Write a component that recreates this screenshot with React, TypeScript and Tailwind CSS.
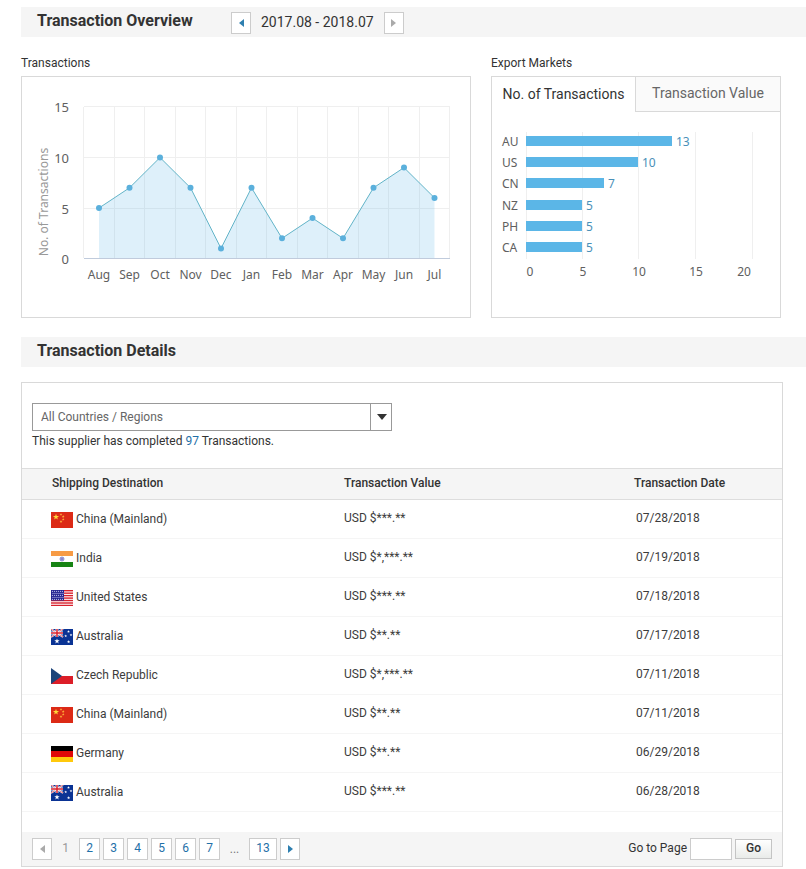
import React, { useState } from "react";

const months = ["Aug", "Sep", "Oct", "Nov", "Dec", "Jan", "Feb", "Mar", "Apr", "May", "Jun", "Jul"];
const counts = [5, 7, 10, 7, 1, 7, 2, 4, 2, 7, 9, 6];

const markets = [
  { code: "AU", value: 13 },
  { code: "US", value: 10 },
  { code: "CN", value: 7 },
  { code: "NZ", value: 5 },
  { code: "PH", value: 5 },
  { code: "CA", value: 5 },
];

const rows = [
  { country: "China (Mainland)", flag: "cn", value: "USD $***.**", date: "07/28/2018" },
  { country: "India", flag: "in", value: "USD $*,***.**", date: "07/19/2018" },
  { country: "United States", flag: "us", value: "USD $***.**", date: "07/18/2018" },
  { country: "Australia", flag: "au", value: "USD $**.**", date: "07/17/2018" },
  { country: "Czech Republic", flag: "cz", value: "USD $*,***.**", date: "07/11/2018" },
  { country: "China (Mainland)", flag: "cn", value: "USD $**.**", date: "07/11/2018" },
  { country: "Germany", flag: "de", value: "USD $**.**", date: "06/29/2018" },
  { country: "Australia", flag: "au", value: "USD $***.**", date: "06/28/2018" },
];

function starPoints(cx: number, cy: number, r: number) {
  return Array.from({ length: 10 }, (_, i) => {
    const radius = i % 2 ? r * 0.4 : r;
    const a = -Math.PI / 2 + (i * Math.PI) / 5;
    return `${cx + radius * Math.cos(a)},${cy + radius * Math.sin(a)}`;
  }).join(" ");
}

function Star({ x, y, r, fill }: { x: number; y: number; r: number; fill: string }) {
  return <polygon points={starPoints(x, y, r)} fill={fill} />;
}

function Flag({ code }: { code: string }) {
  return (
    <svg viewBox="0 0 22 16" className="h-4 w-[22px] shrink-0" aria-hidden="true">
      {code === "cn" && (
        <>
          <rect width="22" height="16" fill="#dc2a16" />
          <Star x={5} y={5} r={3.2} fill="#ffd83a" />
          <Star x={10} y={2.4} r={1.5} fill="#ffb03a" />
          <Star x={12.2} y={4.6} r={1.5} fill="#ffb03a" />
          <Star x={12.2} y={7.4} r={1.5} fill="#ffb03a" />
          <Star x={10} y={9.6} r={1.5} fill="#ffb03a" />
        </>
      )}
      {code === "in" && (
        <>
          <rect width="22" height="16" fill="#fff" />
          <rect width="22" height="5" fill="#f79b45" />
          <rect y="11" width="22" height="5" fill="#178414" />
          <circle cx="11" cy="8" r="2" fill="#b9b9e6" stroke="#7777c4" strokeWidth="0.8" />
          <circle cx="11" cy="8" r="0.7" fill="#3c3ca0" />
        </>
      )}
      {code === "us" && (
        <>
          <rect width="22" height="16" fill="#fff" />
          {[0, 1, 2, 3, 4, 5, 6].map((i) => (
            <rect key={i} y={i * 2.46} width="22" height="1.4" fill="#d8202c" />
          ))}
          <rect width="13" height="10.5" fill="#23238f" />
          {Array.from({ length: 30 }, (_, i) => {
            const r = Math.floor(i / 6);
            return <circle key={i} cx={1.4 + (i % 6) * 2 + (r % 2 ? 0.6 : 0)} cy={1.3 + r * 2} r="0.6" fill="#c9c9f2" />;
          })}
        </>
      )}
      {code === "au" && (
        <>
          <rect width="22" height="16" fill="#0a3394" />
          <path d="M0 0L12 8M12 0L0 8" stroke="#fff" strokeWidth="1.8" />
          <path d="M0 0L12 8M12 0L0 8" stroke="#d8202c" strokeWidth="0.7" />
          <path d="M6 0V8M0 4H12" stroke="#fff" strokeWidth="2.8" />
          <path d="M6 0V8M0 4H12" stroke="#d8202c" strokeWidth="1.5" />
          <Star x={6} y={12.2} r={2.8} fill="#fff" />
          <Star x={17.5} y={2.6} r={1.5} fill="#fff" />
          <Star x={14.7} y={7} r={1.5} fill="#fff" />
          <Star x={20} y={6} r={1.5} fill="#fff" />
          <Star x={17.6} y={12.8} r={1.7} fill="#fff" />
        </>
      )}
      {code === "cz" && (
        <>
          <rect width="22" height="8" fill="#fff" />
          <rect y="8" width="22" height="8" fill="#dc1e28" />
          <path d="M0 0L11 8L0 16Z" fill="#1d4479" />
        </>
      )}
      {code === "de" && (
        <>
          <rect width="22" height="16" fill="#000" />
          <rect y="5" width="22" height="6" fill="#e00808" />
          <rect y="11" width="22" height="5" fill="#ffc90c" />
        </>
      )}
    </svg>
  );
}

function Arrow({ dir, className }: { dir: "left" | "right"; className: string }) {
  return (
    <svg viewBox="0 0 5 8" className={`h-2 w-[5px] fill-current ${className}`} aria-hidden="true">
      <path d={dir === "left" ? "M5 0V8L0 4Z" : "M0 0V8L5 4Z"} />
    </svg>
  );
}

function LineChart() {
  const px = (i: number) => 77 + i * 30.5;
  const py = (v: number) => 181.5 - v * 10.1;
  const line = counts.map((v, i) => `${px(i)},${py(v)}`).join(" ");
  return (
    <svg viewBox="0 0 448 240" className="block w-full font-['Noto_Sans',sans-serif] text-[12px]" role="img" aria-label="Transactions per month">
      {Array.from({ length: 13 }, (_, i) => (
        <line key={i} x1={Math.round(62 + i * 30.5) - 0.5} x2={Math.round(62 + i * 30.5) - 0.5} y1="30" y2="181" stroke="#efefef" />
      ))}
      {[29.5, 80.5, 131.5].map((y) => (
        <line key={y} x1="62" x2="428" y1={y} y2={y} stroke="#efefef" />
      ))}
      <polygon points={`${px(0)},181 ${line} ${px(11)},181`} fill="#5bb6e7" fillOpacity="0.2" />
      <line x1="62" x2="428" y1="181.5" y2="181.5" stroke="#c0cbdc" />
      <polyline points={line} fill="none" stroke="#62b4c8" strokeWidth="1" />
      {counts.map((v, i) => (
        <circle key={i} cx={px(i)} cy={py(v)} r="3" fill="#5bb0dc" />
      ))}
      <g fill="#606060">
        {months.map((m, i) => (
          <text key={m} x={px(i)} y="202" textAnchor="middle">{m}</text>
        ))}
      </g>
      <g fill="#606060" className="text-[13px]">
        {[15, 10, 5, 0].map((n, i) => (
          <text key={n} x="47" y={35 + i * 51 - (i === 3 ? 1 : 0)} textAnchor="end">{n}</text>
        ))}
      </g>
      <text transform="translate(26 125) rotate(-90)" textAnchor="middle" fill="#999">No. of Transactions</text>
    </svg>
  );
}

function MarketChart() {
  const ticks = [
    { n: 0, x: 38 },
    { n: 5, x: 91 },
    { n: 10, x: 147 },
    { n: 15, x: 204 },
    { n: 20, x: 252 },
  ];
  return (
    <svg viewBox="0 0 288 205" className="block w-full font-['Noto_Sans',sans-serif] text-[12px]" role="img" aria-label="Transactions per export market">
      {[34.5, 90.5, 146.5, 203.5, 260.5].map((x) => (
        <line key={x} x1={x} x2={x} y1="20" y2="147" stroke="#efefef" />
      ))}
      {markets.map((m, i) => {
        const y = Math.round(24 + i * 21.2);
        const w = Math.round(m.value * 11.3 - 1);
        return (
          <g key={m.code}>
            <text x="10" y={y + 10} fill="#606060">{m.code}</text>
            <rect x="34" y={y} width={w} height="10" fill="#5bb6e7" />
            <text x={w + 38} y={y + 10} fill="#4a90b8">{m.value}</text>
          </g>
        );
      })}
      <g fill="#606060" textAnchor="middle">
        {ticks.map((t) => (
          <text key={t.n} x={t.x} y="164">{t.n}</text>
        ))}
      </g>
    </svg>
  );
}

export default function App() {
  const [page, setPage] = useState("");
  const box = "flex h-[22px] items-center justify-center border border-[#cccccc] bg-white";
  return (
    <main className="min-w-[700px] bg-white pt-[7px] pl-[21px] font-[Roboto,sans-serif] text-[12px] leading-4 text-[#333333]">
      <header className="flex h-[30px] items-center bg-[#f5f5f5] pl-4">
        <h1 className="w-[194px] pb-[2px] text-[16px] leading-5 font-bold">Transaction Overview</h1>
        <div className="flex items-center gap-[10px] pt-[2px] text-[14px]">
          <button className={`${box} w-5`} aria-label="Previous period">
            <Arrow dir="left" className="text-[#2e7fb0]" />
          </button>
          <span className="pb-[2px]">2017.08 - 2018.07</span>
          <button className={`${box} w-5`} aria-label="Next period">
            <Arrow dir="right" className="text-[#aaaaaa]" />
          </button>
        </div>
      </header>

      <div className="mt-[18px] flex gap-5 pr-[25px]">
        <section className="flex min-w-0 flex-[45] flex-col gap-[5px]">
          <h2>Transactions</h2>
          <div className="flex-1 border border-[#d9d9d9]">
            <LineChart />
          </div>
        </section>
        <section className="flex min-w-0 flex-[29] flex-col gap-[5px]">
          <h2>Export Markets</h2>
          <div className="flex-1 border border-[#d9d9d9]">
            <div role="tablist" className="flex h-[35px] text-[14px] whitespace-nowrap">
              <button role="tab" aria-selected="true" className="flex-[143] pb-[2px]">No. of Transactions</button>
              <button role="tab" aria-selected="false" className="flex-[144] border-b border-l border-[#d9d9d9] bg-[#fafafa] pb-[2px] text-[#666666]">Transaction Value</button>
            </div>
            <MarketChart />
          </div>
        </section>
      </div>

      <header className="mt-[19px] flex h-[30px] items-center bg-[#f5f5f5] pl-4">
        <h1 className="pb-[2px] text-[16px] leading-5 font-bold">Transaction Details</h1>
      </header>

      <section className="mt-[15px] mr-[23px] border border-[#d9d9d9]">
        <div className="px-[10px] pt-5 pb-[19px]">
          <div className="relative w-[360px]">
            <select aria-label="Country or region" className="block h-7 w-full appearance-none border border-[#999999] bg-white pr-6 pl-2 text-[#666666]">
              <option>All Countries / Regions</option>
            </select>
            <span className="pointer-events-none absolute inset-y-0 right-0 flex w-[22px] items-center justify-center border-l border-[#999999]">
              <svg viewBox="0 0 10 6" className="h-[6px] w-[10px]" aria-hidden="true">
                <path d="M0 0H10L5 6Z" fill="#333" />
              </svg>
            </span>
          </div>
          <p className="mt-[2px]">
            This supplier has completed <span className="text-[#1f70a8]">97</span> Transactions.
          </p>
        </div>

        <table className="w-full table-fixed border-collapse text-left">
          <thead>
            <tr className="h-[31px] border-y border-[#dddddd] bg-[#f5f5f5] [&>th]:pb-[2px] [&>th]:font-medium">
              <th className="w-[322px] pl-[30px]">Shipping Destination</th>
              <th>Transaction Value</th>
              <th className="w-[148px]">Transaction Date</th>
            </tr>
          </thead>
          <tbody className="text-[#3c3c3c]">
            {rows.map((r, i) => (
              <tr key={i} className="h-[39px] border-b border-[#f5f5f5]">
                <td className="pl-[29px]">
                  <div className="flex items-start gap-[3px]">
                    <span className="pt-[1px]">
                      <Flag code={r.flag} />
                    </span>
                    <span>{r.country}</span>
                  </div>
                </td>
                <td className="pb-[2px]">{r.value}</td>
                <td className="pb-[2px] pl-[2px]">{r.date}</td>
              </tr>
            ))}
          </tbody>
        </table>

        <footer className="mt-5 flex h-[34px] items-center justify-between bg-[#f5f5f5] px-[10px]">
          <nav aria-label="Pages" className="flex items-center gap-[3px] text-[#1f70a8]">
            <button className={`${box} w-5`} aria-label="Previous page">
              <Arrow dir="left" className="text-[#aaaaaa]" />
            </button>
            <span className="w-[21px] pb-[2px] text-center text-[#999999]">1</span>
            {[2, 3, 4, 5, 6, 7].map((n) => (
              <a key={n} href={`#page-${n}`} className={`${box} w-[21px] pb-[2px]`}>{n}</a>
            ))}
            <span className="w-[23px] text-center text-[#777777]">...</span>
            <a href="#page-13" className={`${box} w-7 pb-[2px]`}>13</a>
            <button className={`${box} w-5`} aria-label="Next page">
              <Arrow dir="right" className="text-[#2e7fb0]" />
            </button>
          </nav>
          <form className="flex items-center gap-[3px]" onSubmit={(e) => e.preventDefault()}>
            <label htmlFor="page" className="pb-[2px]">Go to Page</label>
            <input id="page" value={page} onChange={(e) => setPage(e.target.value)} className="h-[22px] w-[42px] border border-[#cccccc] bg-white px-1" />
            <button className="h-5 w-[37px] border border-[#c4c4c4] bg-linear-to-b from-white to-[#e9ebe9] pb-[2px] font-medium">Go</button>
          </form>
        </footer>
      </section>
    </main>
  );
}
